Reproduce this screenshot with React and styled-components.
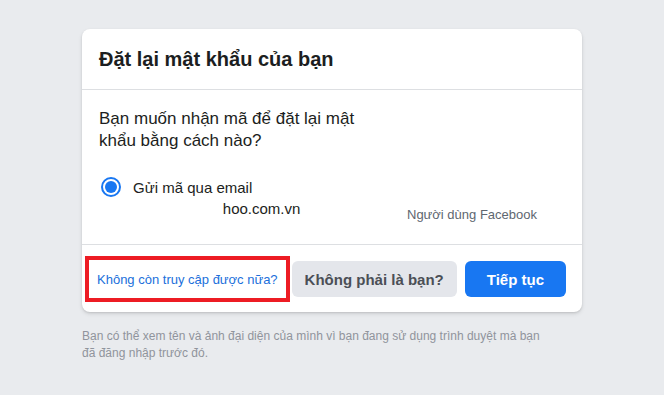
import React from "react";
import styled, { createGlobalStyle } from "styled-components";

const GlobalStyle = createGlobalStyle`
    body {
        margin: 0;
        background: #e9ebee;
        font-family: "Liberation Sans", Arial, Helvetica, sans-serif;
    }
`;

const Page = styled.div`
    width: 500px;
    margin: 0 auto;
    padding-top: 29px;
`;

const Card = styled.div`
    background: #fff;
    border-radius: 8px;
    box-shadow: 0 1px 2px rgba(0, 0, 0, 0.1), 0 2px 4px rgba(0, 0, 0, 0.1);
`;

const Header = styled.div`
    padding: 0 17px;
    height: 60px;
    display: flex;
    align-items: center;
    border-bottom: 1px solid #dddfe2;
`;

const Title = styled.h2`
    margin: 0;
    font-size: 20px;
    font-weight: bold;
    color: #1c1e21;
`;

const Body = styled.div`
    padding: 18px 16px 0 17px;
    height: 136px;
    border-bottom: 1px solid #dddfe2;
`;

const Question = styled.p`
    margin: 0;
    width: 280px;
    font-size: 17px;
    line-height: 22px;
    color: #1c1e21;
`;

const Choices = styled.div`
    display: flex;
    justify-content: space-between;
    margin-top: 25px;
`;

const Option = styled.label`
    display: flex;
    gap: 12px;
    padding-left: 2px;
`;

const Radio = styled.span`
    width: 20px;
    height: 20px;
    box-sizing: border-box;
    border-radius: 50%;
    border: 2px solid #1877f2;
    display: flex;
    align-items: center;
    justify-content: center;
    flex-shrink: 0;
    &::after {
        content: "";
        width: 12px;
        height: 12px;
        border-radius: 50%;
        background: #1877f2;
    }
`;

const OptionText = styled.div`
    display: flex;
    flex-direction: column;
    padding-top: 1px;
`;

const Method = styled.span`
    font-size: 15px;
    line-height: 20px;
    color: #1c1e21;
    white-space: nowrap;
`;

const Contact = styled.span`
    font-size: 15px;
    line-height: 20px;
    color: #1c1e21;
    margin-top: 1px;
    margin-left: -3px;
    white-space: nowrap;
`;

const Hidden = styled.span`
    color: #fff;
`;

const Profile = styled.div`
    width: 130px;
    margin-right: 29px;
    display: flex;
    align-items: flex-end;
`;

const ProfileName = styled.span`
    font-size: 13px;
    color: #606770;
    margin-bottom: -3px;
    white-space: nowrap;
`;

const Footer = styled.div`
    display: flex;
    align-items: center;
    justify-content: space-between;
    padding: 16px 16px 15px;
`;

const Highlight = styled.div`
    border: 4px solid #ed1c24;
    padding: 0 8px;
    height: 38px;
    display: flex;
    align-items: center;
    margin: -5px 0 -5px -13px;
`;

const Link = styled.a`
    font-size: 13px;
    color: #216fdb;
    text-decoration: none;
    white-space: nowrap;
    cursor: pointer;
`;

const Actions = styled.div`
    display: flex;
    gap: 8px;
`;

const Button = styled.button`
    height: 36px;
    border: 0;
    border-radius: 6px;
    padding: 0 ${(props) => props.pad}px;
    font-family: inherit;
    font-size: 15px;
    font-weight: bold;
    white-space: nowrap;
    background: ${(props) => (props.primary ? "#1877f2" : "#e4e6eb")};
    color: ${(props) => (props.primary ? "#fff" : "#4b4f56")};
    cursor: pointer;
`;

const Note = styled.p`
    margin: 16px 0 0;
    font-size: 12px;
    line-height: 17px;
    color: #90949c;
    padding-right: 30px;
`;

export default function App() {
    return (
        <>
            <GlobalStyle />
            <Page>
                <Card>
                    <Header>
                        <Title>Đặt lại mật khẩu của bạn</Title>
                    </Header>
                    <Body>
                        <Question>Bạn muốn nhận mã để đặt lại mật khẩu bằng cách nào?</Question>
                        <Choices>
                            <Option>
                                <Radio />
                                <OptionText>
                                    <Method>Gửi mã qua email</Method>
                                    <Contact>
                                        <Hidden>nguyenth@ya</Hidden>hoo.com.vn
                                    </Contact>
                                </OptionText>
                            </Option>
                            <Profile>
                                <ProfileName>Người dùng Facebook</ProfileName>
                            </Profile>
                        </Choices>
                    </Body>
                    <Footer>
                        <Highlight>
                            <Link>Không còn truy cập được nữa?</Link>
                        </Highlight>
                        <Actions>
                            <Button pad={13}>Không phải là bạn?</Button>
                            <Button primary pad={22}>Tiếp tục</Button>
                        </Actions>
                    </Footer>
                </Card>
                <Note>
                    Bạn có thể xem tên và ảnh đại diện của mình vì bạn đang sử dụng trình duyệt mà bạn đã đăng nhập trước đó.
                </Note>
            </Page>
        </>
    );
}
